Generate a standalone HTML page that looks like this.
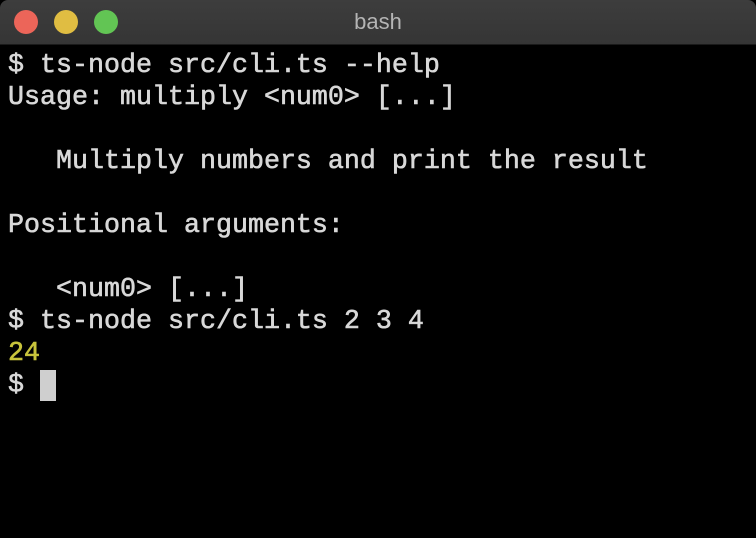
<!DOCTYPE html>
<html><head><style>
html,body{margin:0;padding:0;background:#000;width:756px;height:538px;overflow:hidden}
.tb{position:absolute;left:0;top:0;width:756px;height:44px;background:linear-gradient(#3d3d3d,#353535);border-bottom:1px solid #1a1a1a;border-radius:8px 8px 0 0}
.c{position:absolute;top:10px;width:24px;height:24px;border-radius:50%}
.t{position:absolute;top:0;width:756px;text-align:center;font:22px/44px "Liberation Sans",sans-serif;color:#b4b4b4}
pre{position:absolute;left:8px;top:50px;margin:0;font:26.67px/32px "Liberation Mono",monospace;color:#d8d8d8;-webkit-text-stroke:0.6px #d8d8d8}
.y{color:#c8c43c;-webkit-text-stroke:0.6px #c8c43c}
.cur{display:inline-block;width:16px;height:31px;background:#cfcfcf;vertical-align:top}
</style></head><body>
<div class="tb"><div class="c" style="left:14px;background:#ec6559"></div><div class="c" style="left:54px;background:#e0bd42"></div><div class="c" style="left:94px;background:#62c554"></div><div class="t">bash</div></div>
<pre>$ ts-node src/cli.ts --help
Usage: multiply &lt;num0&gt; [...]

   Multiply numbers and print the result

Positional arguments:

   &lt;num0&gt; [...]
$ ts-node src/cli.ts 2 3 4
<span class="y">24</span>
$ <span class="cur"></span></pre>
</body></html>
